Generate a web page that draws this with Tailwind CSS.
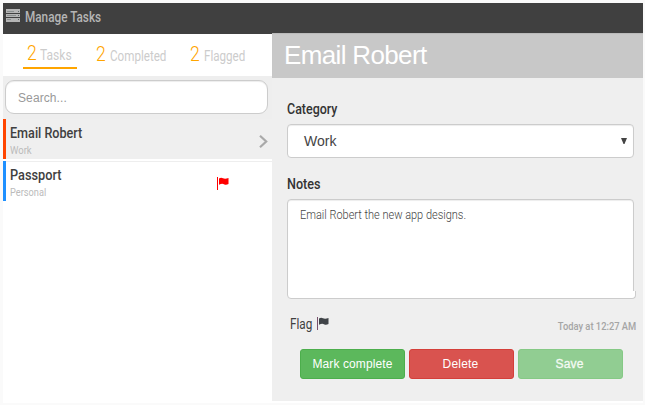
<!DOCTYPE html>
<html lang="en">
<head>
<meta charset="utf-8">
<title>Manage Tasks</title>
<script src="https://cdn.jsdelivr.net/npm/@tailwindcss/browser@4"></script>
</head>
<body class="h-[405px] w-[645px] overflow-hidden bg-[#fafafa] pt-[3px] pl-[3px] font-['Roboto',sans-serif]">
<div class="flex h-[400px] w-[640px] flex-col bg-white">
  <header class="flex h-[30px] shrink-0 items-start bg-[#404040] pt-[6px] pl-[3px]">
    <svg class="shrink-0" width="14" height="13" viewBox="0 0 14 13"><path fill="#b5b5b5" d="M0 0h14v4H0zM0 5h14v3H0zM0 9h14v4H0z"/><path stroke="#8a8f8f" d="M1 2.5h7M1 6.5h9M1 10.5h4"/><path stroke="#5b6666" d="M12 2.5h1M12 6.5h1M12 10.5h1"/></svg>
    <h1 class="ml-[5px] w-[76px] origin-left scale-x-[.84] text-sm leading-[17px] font-medium whitespace-nowrap text-[#b5b5b5]">Manage Tasks</h1>
  </header>
  <main class="flex min-h-0 flex-1">
    <section class="w-[269px] shrink-0 border-t border-[#404040] bg-white">
      <nav class="flex h-[42px] pl-5">
        <div class="flex h-[35px] w-[54px] items-baseline border-b-2 border-[#ffa500] pt-[5px] pl-[4px]">
          <span class="w-[14px] origin-left scale-x-[.88] text-xl leading-7 font-light text-[#ffa500]">2</span>
          <span class="origin-left scale-x-[.86] text-sm whitespace-nowrap text-[#ccc]">Tasks</span>
        </div>
        <div class="ml-[19px] flex h-[35px] w-[71px] items-baseline pt-[6px]">
          <span class="w-[14px] shrink-0 origin-left scale-x-[.88] text-xl leading-7 font-light text-[#ffa500]">2</span>
          <span class="origin-left scale-x-[.83] text-sm whitespace-nowrap text-[#ccc]">Completed</span>
        </div>
        <div class="ml-[23px] flex h-[35px] w-[56px] items-baseline pt-[6px]">
          <span class="w-[14px] shrink-0 origin-left scale-x-[.88] text-xl leading-7 font-light text-[#ffa500]">2</span>
          <span class="origin-left scale-x-[.83] text-sm whitespace-nowrap text-[#ccc]">Flagged</span>
        </div>
      </nav>
      <div class="h-[43px] bg-[#eee] pt-[4px] pl-[2px]">
        <input class="block h-[34px] w-[263px] rounded-[9px] border border-[#ccc] bg-white px-3 pt-[2px] font-['Liberation_Sans',sans-serif] text-[12px] tracking-[.1px] text-[#999] shadow-[inset_0_1px_1px_#00000013] placeholder:text-[#999]" placeholder="Search...">
      </div>
      <ul>
        <li class="flex h-[40px] border-l-[3px] border-[#ff4500] bg-[#efefef] pl-[4px]">
          <div class="w-[240px] pt-[4px]">
            <div class="w-[73px] origin-left scale-x-[.84] text-[15px] leading-5 font-medium whitespace-nowrap text-[#404040]">Email Robert</div>
            <div class="mt-px w-[22px] origin-left scale-x-[.86] text-[11px] leading-[14px] whitespace-nowrap text-[#bbb]">Work</div>
          </div>
          <svg class="mt-[16px] ml-[9px]" width="9" height="13" viewBox="0 0 9 13"><path d="M1 .8 7.2 6.5 1 12.2" fill="none" stroke="#a9a9a9" stroke-width="2.2"/></svg>
        </li>
        <li class="mt-[2px] flex h-[40px] border-l-[3px] border-[#1e90ff] bg-white">
          <div class="flex w-full border-t border-[#eee] pl-[4px]">
            <div class="w-[207px] pt-[3px]">
              <div class="w-[51px] origin-left scale-x-[.85] text-[15px] leading-5 font-medium whitespace-nowrap text-[#404040]">Passport</div>
              <div class="mt-px w-[36px] origin-left scale-x-[.84] text-[11px] leading-[14px] whitespace-nowrap text-[#bbb]">Personal</div>
            </div>
            <svg class="mt-[15px]" width="12" height="13" viewBox="0 0 12 13"><path fill="red" d="M0 0h1v13H0zM2 1.6Q4 .2 6 1.3T11.5 1v6Q9 8.3 7 7.2T2 7.8z"/></svg>
          </div>
        </li>
      </ul>
    </section>
    <section class="flex h-[368px] flex-1 flex-col bg-[#efefef]">
      <h2 class="h-[45px] bg-[#c8c8c8] pl-[12px] font-['Liberation_Sans',sans-serif] text-[26px] leading-[45px] tracking-[-.65px] text-white shadow-[inset_0_1px_1px_#00000013]">Email Robert</h2>
      <div class="pt-[22px] pl-[15px]">
        <label class="block h-[24px] w-[51px] origin-left scale-x-[.89] text-[14px] leading-[18px] font-medium whitespace-nowrap text-[#333]">Category</label>
        <div class="flex h-[34px] w-[347px] items-center justify-between rounded border border-[#ccc] bg-white pr-[6px] pl-[16px] font-['Liberation_Sans',sans-serif] text-[14px] text-[#444] shadow-[inset_0_1px_1px_#00000013]">
          <span>Work</span>
          <svg width="6" height="6" viewBox="0 0 6 6"><path fill="#444" d="M0 0h6L3.5 6h-1z"/></svg>
        </div>
        <label class="mt-[17px] block h-[24px] w-[34px] origin-left scale-x-[.9] text-[14px] leading-[18px] font-medium whitespace-nowrap text-[#333]">Notes</label>
        <div class="relative h-[100px] w-[347px] rounded border border-[#ccc] bg-white pt-[7px] pl-[12px] shadow-[inset_0_1px_1px_#00000013]">
          <p class="w-[184px] origin-left scale-x-[.915] text-[12px] leading-4 font-light whitespace-nowrap text-[#444]">Email Robert the new app designs.</p>
          <span class="absolute -right-[3px] -bottom-px h-[8px] w-[8px] rounded-br border-r border-b border-[#ccc] bg-white"></span>
        </div>
        <div class="flex h-[50px] w-[349px] justify-between pt-[16px] pl-[3px]">
          <div class="flex">
            <span class="w-[27px] origin-left scale-x-[.84] text-[14px] leading-[18px] whitespace-nowrap text-[#404040]">Flag</span>
            <svg class="mt-[2px]" width="12" height="13" viewBox="0 0 12 13"><path fill="#404448" d="M2 1.6Q4 .2 6 1.3T11.5 1v6Q9 8.3 7 7.2T2 7.8z"/><path fill="#77506b" d="M0 0h1v13H0z"/></svg>
          </div>
          <time class="mt-[3px] block origin-right scale-x-[.85] text-[11px] leading-[18px] font-medium whitespace-nowrap text-[#a5a5a5]">Today at 12:27 AM</time>
        </div>
        <div class="flex gap-[4px] pl-[13px] font-['Liberation_Sans',sans-serif] text-[12px] text-white">
          <button class="h-[30px] w-[105px] rounded-[3px] border border-[#4cae4c] bg-[#5cb85c] tracking-[.1px]">Mark complete</button>
          <button class="h-[30px] w-[105px] rounded-[3px] border border-[#d43f3a] bg-[#d9534f] pr-[2px] tracking-[.2px]">Delete</button>
          <button class="h-[30px] w-[105px] rounded-[3px] border border-[#85c985] bg-[#91cd92] pr-[2px] tracking-[.2px] text-[#f4faf4] [-webkit-text-stroke:.3px_#f4faf4]">Save</button>
        </div>
      </div>
    </section>
  </main>
</div>
</body>
</html>
